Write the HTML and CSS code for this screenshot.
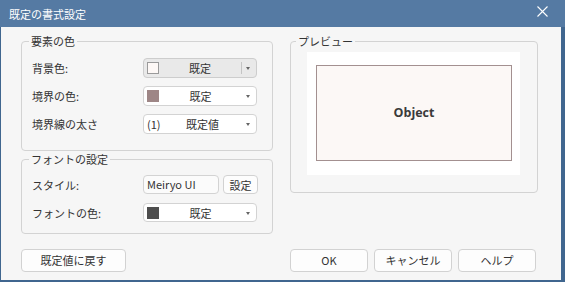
FILE: index.html
```html
<!DOCTYPE html>
<html lang="ja">
<head>
    <meta charset="UTF-8">
    <meta name="viewport" content="width=device-width, initial-scale=1.0">
    <title>既定の書式設定</title>
    <link rel="stylesheet" href="styles.css">
</head>
<body>
    <div class="titlebar">
        <span class="title">既定の書式設定</span>
        <svg class="close" width="11" height="11" viewBox="0 0 11 11">
            <path d="M0.5 0.5 L10.5 10.5 M10.5 0.5 L0.5 10.5" stroke="#ffffff" stroke-width="1.1" fill="none"/>
        </svg>
    </div>
    <div class="content">
        <div class="left-col">
            <fieldset class="group group-colors">
                <legend>要素の色</legend>
                <div class="row">
                    <span class="label">背景色:</span>
                    <div class="combo combo-active">
                        <span class="swatch swatch-bg"></span>
                        <span class="combo-text">既定</span>
                        <span class="combo-sep"></span>
                        <span class="arrow"></span>
                    </div>
                </div>
                <div class="row">
                    <span class="label">境界の色:</span>
                    <div class="combo">
                        <span class="swatch swatch-border"></span>
                        <span class="combo-text">既定</span>
                        <span class="arrow"></span>
                    </div>
                </div>
                <div class="row">
                    <span class="label">境界線の太さ</span>
                    <div class="combo">
                        <span class="combo-num">(1)</span>
                        <span class="combo-text">既定値</span>
                        <span class="arrow"></span>
                    </div>
                </div>
            </fieldset>
            <fieldset class="group group-font">
                <legend>フォントの設定</legend>
                <div class="row">
                    <span class="label">スタイル:</span>
                    <div class="textbox">Meiryo UI</div>
                    <button class="btn btn-small">設定</button>
                </div>
                <div class="row">
                    <span class="label">フォントの色:</span>
                    <div class="combo">
                        <span class="swatch swatch-font"></span>
                        <span class="combo-text">既定</span>
                        <span class="arrow"></span>
                    </div>
                </div>
            </fieldset>
        </div>
        <fieldset class="group preview">
            <legend>プレビュー</legend>
            <div class="canvas">
                <div class="object">Object</div>
            </div>
        </fieldset>
        <div class="footer-left">
            <button class="btn btn-reset">既定値に戻す</button>
        </div>
        <div class="actions">
            <button class="btn">OK</button>
            <button class="btn">キャンセル</button>
            <button class="btn">ヘルプ</button>
        </div>
    </div>
</body>
</html>
```

FILE: styles.css
```css
* {
    box-sizing: border-box;
}
body {
    margin: 0;
    width: 565px;
    height: 282px;
    background-color: #40668f; /* window frame */
    font-family: "Noto Sans CJK JP", "Noto Sans", sans-serif;
    font-size: 11px;
    line-height: 14px;
    color: #333;
}
.titlebar {
    height: 27px;
    display: flex;
    align-items: center;
    justify-content: space-between;
    padding: 0 17px 0 9px;
    background-color: #557aa3;
    color: #ffffff;
}
.title {
    font-size: 11px;
}
.close {
    margin-top: -5px;
}
.content {
    margin-left: 1px;
    width: 560px;
    height: 253px;
    background-color: #f6f6f6;
    padding: 7px 0 0 20px;
    display: grid;
    grid-template-columns: 252px 248px;
    column-gap: 17px;
    row-gap: 6px;
    align-items: start;
}
.group {
    margin: 0;
    border: 1px solid #d3d3d3;
    border-radius: 4px;
    min-width: 0;
}
.group legend {
    padding: 0 2px;
    margin-left: -3px;
}
.group-colors {
    height: 117px;
    padding: 10px 10px 0 10px;
    display: flex;
    flex-direction: column;
    gap: 8px;
}
.group-font {
    margin-top: 1px;
    height: 82px;
    padding: 9px 10px 0 10px;
    display: flex;
    flex-direction: column;
    gap: 9px;
}
.row {
    display: flex;
    align-items: center;
}
.label {
    width: 111px;
}
.combo {
    display: flex;
    align-items: center;
    width: 114px;
    height: 20px;
    padding-left: 3px;
    border: 1px solid #d3d3d3;
    border-radius: 4px;
    background-color: #ffffff;
}
.group-font .combo {
    height: 19px;
}
.combo-active {
    background-color: #e9e9e9;
    border-color: #cdcdcd;
}
.swatch {
    width: 12px;
    height: 12px;
}
.swatch-bg {
    background-color: #fdf8f6;
    border: 1px solid #9a9a9a;
}
.swatch-border {
    background-color: #9e8686;
}
.swatch-font {
    background-color: #4e4e4e;
}
.combo-num {
    width: 16px;
}
.combo-text {
    flex: 1;
    text-align: center;
}
.combo-sep {
    width: 1px;
    height: 12px;
    background-color: #c4c4c4;
}
.arrow {
    width: 14px;
    height: 14px;
    position: relative;
}
.arrow::after {
    content: "";
    position: absolute;
    left: 4px;
    top: 6px;
    border-left: 2.5px solid transparent;
    border-right: 2.5px solid transparent;
    border-top: 3px solid #666;
}
.textbox {
    width: 76px;
    height: 19px;
    padding-left: 3px;
    border: 1px solid #d3d3d3;
    border-radius: 4px;
    background-color: #fbfbfb;
    line-height: 17px;
}
.btn {
    width: 78px;
    height: 22px;
    padding: 0;
    border: 1px solid #d2d2d2;
    border-radius: 4px;
    background-color: #fdfdfd;
    font-family: inherit;
    font-size: 11px;
    color: #333;
}
.btn-small {
    width: 35px;
    height: 19px;
    margin-left: 4px;
}
.btn-reset {
    width: 105px;
    height: 23px;
}
.preview {
    height: 159px;
    padding: 4px 0 0 16px;
}
.preview legend {
    margin-left: -11px;
}
.canvas {
    width: 213px;
    height: 123px;
    padding: 13px 0 0 9px;
    background-color: #ffffff;
}
.object {
    width: 196px;
    height: 96px;
    display: flex;
    align-items: center;
    justify-content: center;
    border: 1px solid #a39090;
    background-color: #fcf8f6;
    font-family: "Open Sans", sans-serif;
    font-weight: 700;
    font-size: 12.5px;
    color: #3a3a3a;
}
.actions {
    display: flex;
    gap: 6px;
}
.actions .btn {
    height: 23px;
}
```
